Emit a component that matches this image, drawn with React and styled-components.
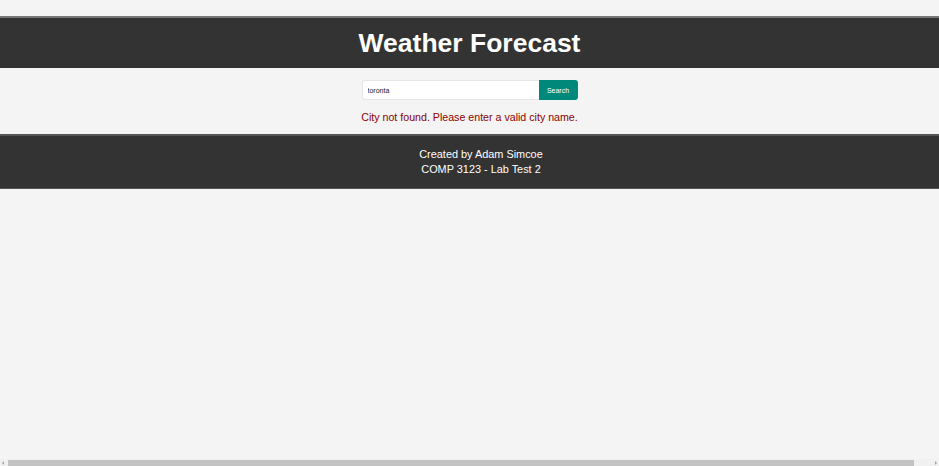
import React, { useState } from "react";
import styled, { createGlobalStyle } from "styled-components";

const GlobalStyle = createGlobalStyle`
  html, body {
    margin: 0;
    padding: 0;
    background: #f4f4f4;
    font-family: "Liberation Sans", Arial, sans-serif;
    overflow: hidden;
  }
`;

const Page = styled.div`
  padding-top: 16px;
  width: 939px;
`;

const Header = styled.header`
  background: #333333;
  border-top: 2px solid #777;
  height: 50px;
  display: flex;
  align-items: center;
  justify-content: center;
`;

const Title = styled.h1`
  margin: 0;
  color: #ffffff;
  font-size: 26.5px;
  font-weight: bold;
`;

const Main = styled.main`
  display: flex;
  flex-direction: column;
  align-items: center;
  padding: 12px 0 11px;
`;

const SearchRow = styled.form`
  display: flex;
  margin: 0;
`;

const SearchInput = styled.input`
  width: 177px;
  height: 20px;
  box-sizing: border-box;
  border: 1px solid #e6e6e6;
  border-right: none;
  border-radius: 3px 0 0 3px;
  padding: 0 5px;
  font-family: "Liberation Sans", Arial, sans-serif;
  font-size: 7px;
  color: #222;
  background: #fff;
  outline: none;
`;

const SearchButton = styled.button`
  width: 39px;
  height: 20px;
  border: none;
  border-radius: 0 3px 3px 0;
  background: #00897b;
  color: #ffffff;
  font-family: "Liberation Sans", Arial, sans-serif;
  font-size: 7px;
  padding: 0;
  cursor: pointer;
`;

const ErrorText = styled.p`
  margin: 11px 0 0;
  color: #8b0000;
  font-size: 10.65px;
`;

const Footer = styled.footer`
  width: 962px;
  background: #333333;
  border-top: 2px solid #555;
  border-bottom: 1px solid #555;
  height: 52px;
  display: flex;
  flex-direction: column;
  align-items: center;
  justify-content: center;
  color: #ffffff;
  font-size: 10.9px;
  line-height: 15px;
`;

const FooterLine = styled.div`
  margin: 0;
`;

const ScrollBar = styled.div`
  position: fixed;
  left: 0;
  right: 0;
  bottom: 0;
  height: 7px;
  background: #f1f1f1;
  display: flex;
  align-items: center;
  padding: 0 2px;
  gap: 2px;
`;

const ScrollArrow = styled.div`
  width: 0;
  height: 0;
  border-top: 2px solid transparent;
  border-bottom: 2px solid transparent;
  border-${(p) => (p.$dir === "left" ? "right" : "left")}: 2px solid #a3a3a3;
`;

const ScrollTrack = styled.div`
  flex: 1;
  height: 6px;
  display: flex;
  align-items: center;
`;

const ScrollThumb = styled.div`
  width: ${(p) => p.$width}px;
  height: 6px;
  margin-left: 2px;
  background: #c3c3c3;
`;

export default function App() {
  const [city, setCity] = useState("toronta");
  return (
    <>
      <GlobalStyle />
      <Page>
        <Header>
          <Title>Weather Forecast</Title>
        </Header>
        <Main>
          <SearchRow onSubmit={(e) => e.preventDefault()}>
            <SearchInput value={city} onChange={(e) => setCity(e.target.value)} />
            <SearchButton type="submit">Search</SearchButton>
          </SearchRow>
          <ErrorText>City not found. Please enter a valid city name.</ErrorText>
        </Main>
        <Footer>
          <FooterLine>Created by Adam Simcoe</FooterLine>
          <FooterLine>COMP 3123 - Lab Test 2</FooterLine>
        </Footer>
      </Page>
      <ScrollBar>
        <ScrollArrow $dir="left" />
        <ScrollTrack>
          <ScrollThumb $width={906} />
        </ScrollTrack>
        <ScrollArrow $dir="right" />
      </ScrollBar>
    </>
  );
}
